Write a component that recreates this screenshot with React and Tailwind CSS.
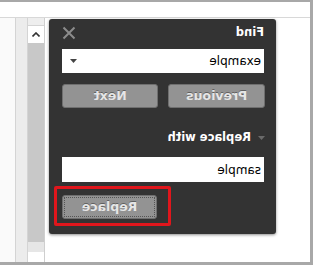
import React from "react";

function CloseIcon() {
    return (
        <svg width="14" height="14" viewBox="0 0 14 14" className="block">
            <path d="M1.5 1.5 L12.5 12.5 M12.5 1.5 L1.5 12.5" stroke="#8c8c8c" strokeWidth="2" fill="none" />
        </svg>
    );
}

function Caret({ color = "#444" }) {
    return (
        <svg width="7" height="4" viewBox="0 0 7 4" className="block">
            <path d="M0 0 L7 0 L3.5 4 Z" fill={color} />
        </svg>
    );
}

function Btn({ children, focused }) {
    return (
        <button
            className={`h-[24px] rounded-[3px] border border-[#6f6f6f] bg-[#939393] text-[12.5px] font-bold text-[#e6e6e6] [text-shadow:0_-1px_0_rgba(0,0,0,0.35)] ${
                focused ? "outline-1 outline-dotted outline-[#555] -outline-offset-3" : ""
            }`}
        >
            {children}
        </button>
    );
}

export default function App() {
    return (
        <div className="w-[313px] h-[267px] bg-white [transform:scaleX(-1)] font-['DejaVu_Sans',sans-serif]">
            <div className="h-[265px] border-t-2 border-l-[3px] border-b-[3px] border-[#a8a8a8] flex flex-col">
                {/* top strip */}
                <div className="h-[16px] bg-white border-b border-[#d8d8d8]"></div>

                <div className="flex flex-1">
                    {/* document area with the find/replace dialog */}
                    <div className="flex-1 pl-[34px] pt-[1px]">
                        <div className="w-[227px] h-[215px] bg-[#333333] rounded-[3px] shadow-[0_1px_3px_rgba(0,0,0,0.45)] pl-[12px] pr-[13px] pt-[6px] flex flex-col">
                            <div className="h-[16px] flex items-center justify-between">
                                <span className="text-[11.5px] font-bold text-white leading-none">Find</span>
                                <CloseIcon />
                            </div>

                            <div className="mt-[8px] h-[24px] bg-white flex items-center justify-between pl-[3px] pr-[8px]">
                                <span className="text-[12px] text-black">example</span>
                                <Caret />
                            </div>

                            <div className="mt-[11px] grid grid-cols-2 gap-[10px] -ml-[1px]">
                                <Btn>Previous</Btn>
                                <Btn>Next</Btn>
                            </div>

                            <div className="mt-[22px] h-[16px] flex items-center gap-[7px] -ml-[1px]">
                                <Caret color="#6a6a6a" />
                                <span className="text-[11.5px] font-bold text-white leading-none">Replace with</span>
                            </div>

                            <div className="mt-[11px] h-[25px] bg-white flex items-center pl-[3px]">
                                <span className="text-[12px] text-black">sample</span>
                            </div>

                            <div className="mt-[13px] flex justify-end">
                                <div className="relative w-[95px] grid">
                                    <Btn focused>Replace</Btn>
                                    <div className="absolute -left-[14px] -right-[8px] -top-[9px] -bottom-[7px] border-[3px] border-[#e0161c] rounded-[2px]"></div>
                                </div>
                            </div>
                        </div>
                    </div>

                    {/* scrollbar and gutters */}
                    <div className="w-[17px] border-l border-[#cfcfcf] flex flex-col">
                        <div className="h-[8px] bg-[#eeeeee] border-b border-[#d4d4d4]"></div>
                        <div className="h-[17px] bg-white flex items-center justify-center">
                            <svg width="8" height="5" viewBox="0 0 8 5" className="block">
                                <path d="M0.5 4.5 L4 1 L7.5 4.5" stroke="#333" strokeWidth="1.6" fill="none" />
                            </svg>
                        </div>
                        <div className="h-[199px] bg-[#c8c8c8]"></div>
                        <div className="h-[10px] bg-[#e6e6e6]"></div>
                        <div className="flex-1 bg-white"></div>
                    </div>
                    <div className="w-[12px] border-l border-[#d4d4d4] bg-[#ececec]"></div>
                    <div className="w-[16px] border-l border-[#d4d4d4] bg-[#fafafa]"></div>
                </div>
            </div>
        </div>
    );
}
